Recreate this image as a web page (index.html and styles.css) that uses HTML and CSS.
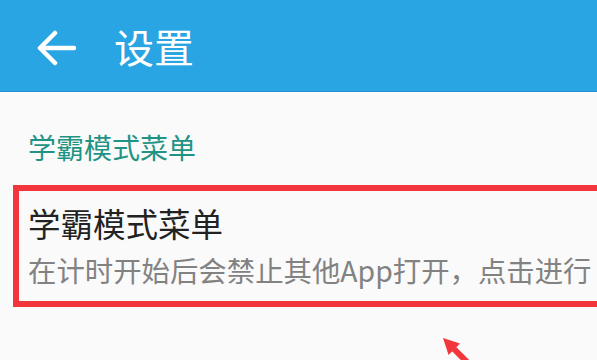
FILE: index.html
```html
<!DOCTYPE html>
<html lang="zh-CN">
<head>
    <meta charset="UTF-8">
    <title>设置</title>
    <link rel="stylesheet" href="styles.css">
</head>
<body>
<div class="header">
    <svg class="back" width="40" height="38" viewBox="0 0 40 38">
        <path d="M38 19H4M19 4L4 19l15 15" fill="none" stroke="#fff" stroke-width="4.5" stroke-linecap="round" stroke-linejoin="round"/>
    </svg>
    <span class="title">设置</span>
</div>
<div class="main">
    <!--分类标题-->
    <p class="section-label">学霸模式菜单</p>
    <div class="item">
        <p class="item-title">学霸模式菜单</p>
        <p class="item-sub">在计时开始后会禁止其他App打开，点击进行</p>
    </div>
    <!--标注箭头-->
    <svg class="mark" width="60" height="25" viewBox="0 0 60 25">
        <path d="M14 3L19.6 20 31 8.6Z" fill="#f2363c"/>
        <path d="M25 14L45 34" stroke="#f2363c" stroke-width="6"/>
    </svg>
</div>
</body>
</html>
```

FILE: styles.css
```css
* {
    margin: 0;
    padding: 0;
}
body {
    background-color: #fafafa;
    font-family: "Noto Sans CJK SC", "Noto Sans", sans-serif;
    overflow: hidden;
    width: 597px;
    height: 360px;
}
.header {
    height: 91px;
    background-color: #28a5e2;
    border-bottom: 1px solid #2193cc;
    display: flex;
    align-items: center;
}
.back {
    margin-left: 36px;
    margin-top: 4px;
}
.title {
    margin-left: 38px;
    color: #fff;
    font-size: 40px;
    line-height: 40px;
}
.main {
    position: relative;
    height: 268px;
    padding-top: 41px;
    box-sizing: border-box;
    overflow: hidden;
}
.section-label {
    margin-left: 28px;
    font-size: 28px;
    line-height: 28px;
    color: #1f9484;
}
.item {
    margin: 24px -20px 0 13px;
    border: 6px solid #f2363c;
    padding: 15px 0 16px 9px;
}
.item-title {
    font-size: 32.5px;
    line-height: 34px;
    color: #222;
}
.item-sub {
    margin-top: 14px;
    font-size: 28.4px;
    line-height: 31px;
    color: #828282;
    white-space: nowrap;
}
.mark {
    position: absolute;
    left: 429px;
    top: 243px;
}
```
